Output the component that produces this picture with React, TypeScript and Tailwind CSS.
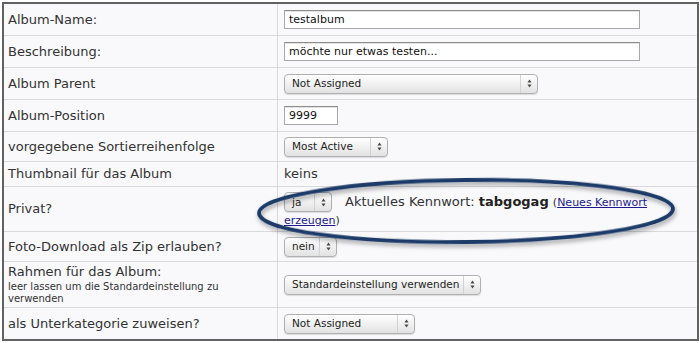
import React from "react";

function Arrows() {
  return (
    <svg width="5" height="9" viewBox="0 0 5 9">
      <path d="M2.5 0.5L4.6 3.4H0.4z M2.5 8.5L0.4 5.6h4.2z" fill="#4a4a4a" />
    </svg>
  );
}

function Select({ label, width }: { label: string; width: string }) {
  return (
    <div
      className={`inline-flex h-[20px] items-center rounded-[4px] border border-[#b0b0b0] bg-gradient-to-b from-white to-[#e2e2e2] align-middle shadow-[0_1px_1px_rgba(0,0,0,0.12)] ${width}`}
    >
      <span className="flex-1 whitespace-nowrap pl-[7px] text-[10.5px] leading-none text-[#1e1e1e]">{label}</span>
      <span className="flex h-full w-[17px] items-center justify-center border-l border-[#d2d2d2]">
        <Arrows />
      </span>
    </div>
  );
}

function TextInput({ value, width }: { value: string; width: string }) {
  return (
    <div
      className={`flex h-[19px] items-center border border-[#a9a9a9] border-t-[#8c8c8c] bg-white px-[4px] shadow-[inset_0_1px_1px_rgba(0,0,0,0.12)] ${width}`}
    >
      <span className="whitespace-nowrap text-[11px] leading-none text-[#111]">{value}</span>
    </div>
  );
}

function Row({
  label,
  height,
  last,
  children,
}: {
  label: React.ReactNode;
  height: string;
  last?: boolean;
  children: React.ReactNode;
}) {
  return (
    <div className={`flex ${height} ${last ? "" : "border-b border-[#d8d8dd]"}`}>
      <div className="flex w-[274px] shrink-0 items-center border-r border-[#d8d8dd] pl-[4px] text-[13px] text-[#333]">
        {label}
      </div>
      <div className="flex min-w-0 flex-1 items-center pl-[6px] pr-[8px] text-[13px] text-[#333]">{children}</div>
    </div>
  );
}

export default function App() {
  return (
    <div className="min-h-[343px] bg-white p-[2px] font-['DejaVu_Sans',sans-serif]">
      <div className="relative w-[697px] border-2 border-[#626262] bg-[#f9f9fb]">
        <Row label="Album-Name:" height="h-[32px]">
          <TextInput value="testalbum" width="w-[356px]" />
        </Row>
        <Row label="Beschreibung:" height="h-[32px]">
          <TextInput value="möchte nur etwas testen..." width="w-[356px]" />
        </Row>
        <Row label="Album Parent" height="h-[32px]">
          <Select label="Not Assigned" width="w-[254px]" />
        </Row>
        <Row label="Album-Position" height="h-[32px]">
          <TextInput value="9999" width="w-[54px]" />
        </Row>
        <Row label="vorgegebene Sortierreihenfolge" height="h-[30px]">
          <Select label="Most Active" width="w-[104px]" />
        </Row>
        <Row label="Thumbnail für das Album" height="h-[25px]">
          <span>keins</span>
        </Row>
        <Row label="Privat?" height="h-[45px]">
          <div className="pt-[2px] leading-[15px]">
            <Select label="ja" width="w-[48px]" />
            <span className="ml-[13px]">Aktuelles Kennwort: </span>
            <b className="font-bold text-[#222]">tabgogag</b>{" "}
            <span className="text-[11px]">(</span>
            <a href="#" className="text-[11px] text-[#1b1b8f] underline">
              Neues Kennwort erzeugen
            </a>
            <span className="text-[11px]">)</span>
          </div>
        </Row>
        <Row label="Foto-Download als Zip erlauben?" height="h-[30px]">
          <Select label="nein" width="w-[53px]" />
        </Row>
        <Row
          label={
            <div className="leading-[13px]">
              <div className="mb-[2px] text-[13px] leading-[15px]">Rahmen für das Album:</div>
              <div className="text-[10px] leading-[12px]">leer lassen um die Standardeinstellung zu verwenden</div>
            </div>
          }
          height="h-[46px]"
        >
          <Select label="Standardeinstellung verwenden" width="w-[197px]" />
        </Row>
        <Row label="als Unterkategorie zuweisen?" height="h-[31px]" last>
          <Select label="Not Assigned" width="w-[131px]" />
        </Row>

        <svg
          className="pointer-events-none absolute left-[-2px] top-[-2px]"
          width="700"
          height="343"
          viewBox="0 0 700 343"
        >
          <defs>
            <filter id="sh" x="-10%" y="-50%" width="120%" height="200%">
              <feDropShadow dx="1" dy="3" stdDeviation="2" floodColor="#000" floodOpacity="0.35" />
            </filter>
          </defs>
          <ellipse
            cx="464"
            cy="209"
            rx="207"
            ry="31"
            transform="rotate(-0.6 464 209)"
            fill="none"
            stroke="#1d3b68"
            strokeWidth="3.8"
            filter="url(#sh)"
          />
        </svg>
      </div>
    </div>
  );
}
